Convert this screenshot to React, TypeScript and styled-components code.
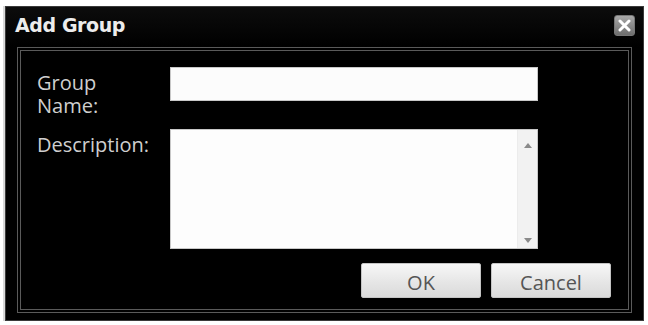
import styled, { createGlobalStyle } from 'styled-components';

const GlobalStyle = createGlobalStyle`
  html, body {
    margin: 0;
    padding: 0;
    background: #ffffff;
  }
  body {
    padding: 6px 4px 4px 5px;
  }
`;

const Dialog = styled.div`
  width: 639px;
  height: 315px;
  box-sizing: border-box;
  background: #000;
  border: 1px solid #3a3a3a;
  box-shadow: -2px 0 0 #d8d8d8;
  display: flex;
  flex-direction: column;
  overflow: hidden;
`;

const TitleBar = styled.div`
  height: 40px;
  flex-shrink: 0;
  display: flex;
  align-items: center;
  justify-content: space-between;
  padding: 0 8px 0 9px;
  background: linear-gradient(#0c0c0c, #000);
`;

const Title = styled.div`
  font-family: 'DejaVu Sans', Verdana, sans-serif;
  font-weight: bold;
  font-size: 19px;
  letter-spacing: -0.4px;
  color: #ececec;
  margin-top: -4px;
`;

const CloseButton = styled.button`
  width: 21px;
  height: 21px;
  padding: 0;
  margin-top: -4px;
  border: 1px solid #777;
  border-radius: 3px;
  background: linear-gradient(#a8a8a8, #6e6e6e);
  display: flex;
  align-items: center;
  justify-content: center;
  cursor: pointer;
`;

const Panel = styled.div`
  flex: 1;
  min-height: 0;
  margin: 0 11px 7px 11px;
  border: 4px double #5a5a5a;
  padding: 16px 17px 11px 16px;
  display: flex;
  flex-direction: column;
`;

const FieldRow = styled.div<{ $gap?: number }>`
  display: grid;
  grid-template-columns: 133px 368px;
  align-items: start;
  margin-bottom: ${(p) => p.$gap ?? 0}px;
`;

const Label = styled.label`
  font-family: 'Open Sans', 'Noto Sans', sans-serif;
  font-size: 20px;
  line-height: 23px;
  color: #cfcfcf;
  padding-top: 4px;
`;

const TextInput = styled.input`
  height: 34px;
  box-sizing: border-box;
  border: 1px solid #c8c8c8;
  background: #fcfcfc;
  outline: none;
  padding: 0 4px;
`;

const TextBox = styled.div`
  height: 120px;
  box-sizing: border-box;
  border: 1px solid #c8c8c8;
  background: #fdfdfd;
  display: flex;
`;

const TextArea = styled.textarea`
  flex: 1;
  border: none;
  resize: none;
  outline: none;
  background: transparent;
`;

const ScrollBar = styled.div`
  width: 19px;
  background: #f2f2f2;
  border-left: 1px solid #ececec;
  display: flex;
  flex-direction: column;
  justify-content: space-between;
  align-items: center;
  padding: 13px 0 5px;
`;

const ButtonRow = styled.div`
  display: flex;
  justify-content: flex-end;
  gap: 10px;
  margin-top: 14px;
`;

const Button = styled.button`
  width: 120px;
  height: 35px;
  border: 1px solid #c4c4c4;
  border-radius: 2px;
  background: linear-gradient(#f7f7f7, #e6e6e6 55%, #dadada);
  font-family: 'Open Sans', 'Noto Sans', sans-serif;
  font-size: 20px;
  line-height: 24px;
  color: #555;
  padding: 4px 0 0;
  cursor: pointer;
`;

function Arrow({ down }: { down?: boolean }) {
  return (
    <svg width="8" height="5" viewBox="0 0 8 5">
      <path d={down ? 'M0 0 L8 0 L4 5 Z' : 'M0 5 L8 5 L4 0 Z'} fill="#8a8a8a" />
    </svg>
  );
}

export default function App() {
  return (
    <>
      <GlobalStyle />
      <Dialog>
        <TitleBar>
          <Title>Add Group</Title>
          <CloseButton aria-label="Close">
            <svg width="13" height="13" viewBox="0 0 13 13">
              <path d="M2 2 L11 11 M11 2 L2 11" stroke="#fff" strokeWidth="3" strokeLinecap="round" />
            </svg>
          </CloseButton>
        </TitleBar>
        <Panel>
          <FieldRow $gap={12}>
            <Label>
              Group
              <br />
              Name:
            </Label>
            <TextInput />
          </FieldRow>
          <FieldRow>
            <Label>Description:</Label>
            <TextBox>
              <TextArea />
              <ScrollBar>
                <Arrow />
                <Arrow down />
              </ScrollBar>
            </TextBox>
          </FieldRow>
          <ButtonRow>
            <Button>OK</Button>
            <Button>Cancel</Button>
          </ButtonRow>
        </Panel>
      </Dialog>
    </>
  );
}
